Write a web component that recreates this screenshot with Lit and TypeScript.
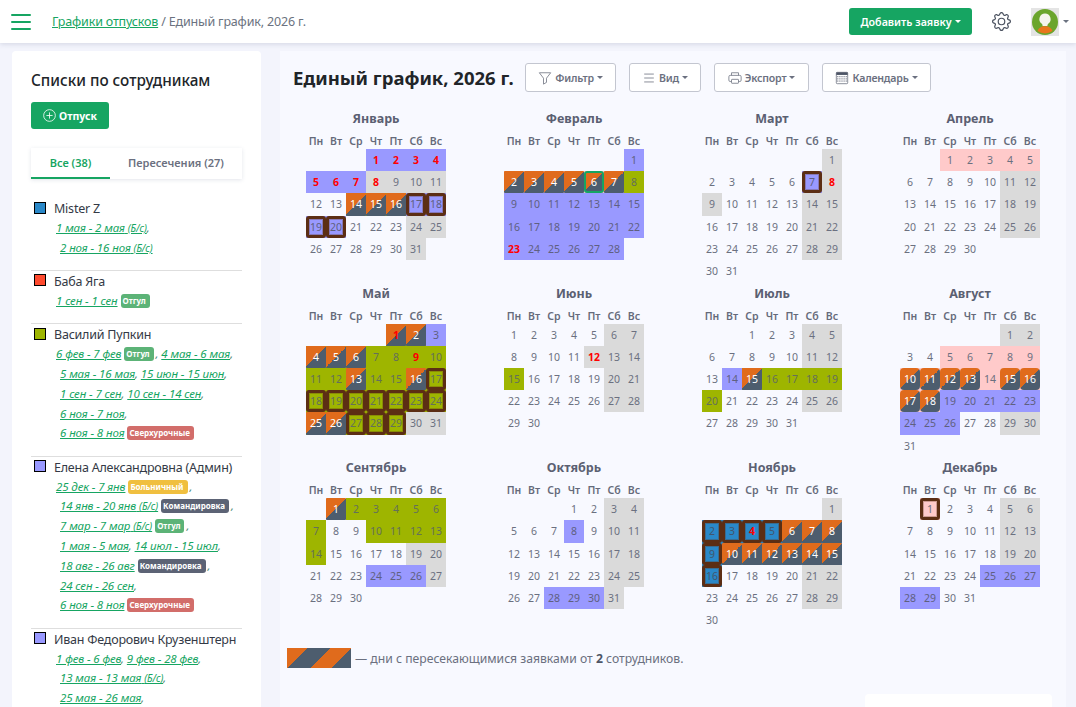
import { LitElement, html, css, svg } from 'lit';
import { customElement } from 'lit/decorators.js';

interface Month {
  name: string;
  offset: number;
  days: number;
  spec: string; // "p:1-7 g:8-11" base colours by day range
  over?: string;
  box?: string;
  red?: string;
  ring?: string;
  corner?: string;
  soft?: boolean;
}

const MONTHS: Month[] = [
  { name: 'Январь', offset: 3, days: 31, spec: 'p:1-7 g:8-11 g:24-25 g:31 p:17-20', over: '14-16', box: '17-20', red: '1-8', corner: 'l' },
  { name: 'Февраль', offset: 6, days: 28, spec: 'p:1 l:8 p:9-28', over: '2-7', ring: '6', red: '23', corner: 'k' },
  { name: 'Март', offset: 6, days: 31, spec: 'g:1 p:7 g:8-9 g:14-15 g:21-22 g:28-29', box: '7', red: '8' },
  { name: 'Апрель', offset: 2, days: 30, spec: 'k:1-5 g:11-12 g:18-19 g:25-26' },
  { name: 'Май', offset: 4, days: 31, spec: 'p:3 l:7-12 l:14-15 l:17-24 l:27-29 g:30-31', over: '1-2 4-6 13 16 25-26', box: '17-24 27-29', red: '1 9', corner: 'l' },
  { name: 'Июнь', offset: 0, days: 30, spec: 'g:6-7 g:12-14 g:20-21 g:27-28 l:15', red: '12' },
  { name: 'Июль', offset: 2, days: 31, spec: 'g:4-5 g:11-12 p:14 l:16-20 g:25-26', over: '15', corner: 'l' },
  { name: 'Август', offset: 5, days: 31, spec: 'g:1-2 k:5-9 k:14 p:19-26 g:29-30', over: '10-13 15-18', corner: 'k', soft: true },
  { name: 'Сентябрь', offset: 1, days: 30, spec: 'l:2-7 l:10-14 g:19-20 p:24-26 g:27', over: '1', corner: 'k' },
  { name: 'Октябрь', offset: 3, days: 31, spec: 'g:3-4 p:8 g:10-11 g:17-18 g:24-25 p:28-30 g:31' },
  { name: 'Ноябрь', offset: 6, days: 30, spec: 'g:1 b:2-5 b:9 b:16 g:21-22 g:28-29', over: '6-8 10-15', box: '2-5 9 16', red: '4', corner: 'b' },
  { name: 'Декабрь', offset: 1, days: 31, spec: 'k:1 g:5-6 g:12-13 g:19-20 p:25-29', box: '1' },
];

const WEEK = ['Пн', 'Вт', 'Ср', 'Чт', 'Пт', 'Сб', 'Вс'];

function expand(list = '') {
  const out = new Set<number>();
  list.split(' ').filter(Boolean).forEach((part) => {
    const [a, b] = part.split('-').map(Number);
    for (let d = a; d <= (b ?? a); d++) out.add(d);
  });
  return out;
}

function colours(spec: string) {
  const out = new Map<number, string>();
  spec.split(' ').forEach((part) => {
    const [c, range] = part.split(':');
    expand(range).forEach((d) => out.set(d, c));
  });
  return out;
}

type Chunk = string | { t: string; bs?: boolean } | { badge: string; cls: string };

interface Person {
  name: string;
  color: string;
  lines: Chunk[][];
}

const l = (t: string, bs = false) => ({ t, bs });
const otg = { badge: 'Отгул', cls: 'b-green' };
const over = { badge: 'Сверхурочные', cls: 'b-red' };
const sick = { badge: 'Больничный', cls: 'b-yellow' };
const trip = { badge: 'Командировка', cls: 'b-slate' };

const PEOPLE: Person[] = [
  {
    name: 'Mister Z',
    color: 'sw-blue',
    lines: [[l('1 мая - 2 мая', true), ','], [l('2 ноя - 16 ноя', true)]],
  },
  { name: 'Баба Яга', color: 'sw-red', lines: [[l('1 сен - 1 сен'), otg]] },
  {
    name: 'Василий Пупкин',
    color: 'sw-olive',
    lines: [
      [l('6 фев - 7 фев'), otg, ', ', l('4 мая - 6 мая'), ','],
      [l('5 мая - 16 мая'), ', ', l('15 июн - 15 июн'), ','],
      [l('1 сен - 7 сен'), ', ', l('10 сен - 14 сен'), ','],
      [l('6 ноя - 7 ноя'), ','],
      [l('6 ноя - 8 ноя'), over],
    ],
  },
  {
    name: 'Елена Александровна (Админ)',
    color: 'sw-purple',
    lines: [
      [l('25 дек - 7 янв'), sick, ','],
      [l('14 янв - 20 янв', true), trip, ','],
      [l('7 мар - 7 мар', true), otg, ','],
      [l('1 мая - 5 мая'), ', ', l('14 июл - 15 июл'), ','],
      [l('18 авг - 26 авг'), trip, ','],
      [l('24 сен - 26 сен'), ','],
      [l('6 ноя - 8 ноя'), over],
    ],
  },
  {
    name: 'Иван Федорович Крузенштерн',
    color: 'sw-purple',
    lines: [
      [l('1 фев - 6 фев'), ', ', l('9 фев - 28 фев'), ','],
      [l('13 мая - 13 мая', true), ','],
      [l('25 мая - 26 мая'), ','],
    ],
  },
];

const caret = html`<span class="caret"></span>`;

@customElement('app-root')
export class AppRoot extends LitElement {
  static styles = css`
    :host {
      display: block;
      height: 707px;
      overflow: hidden;
      background: #f3f4fc;
      font-family: 'Noto Sans', sans-serif;
      color: #6b7080;
    }

    /* top bar */
    .top {
      height: 43px;
      background: #fff;
      box-shadow: 0 1px 5px rgba(60, 70, 110, 0.18);
      display: flex;
      align-items: center;
      padding: 0 7px 0 11px;
      position: relative;
    }
    .burger {
      width: 20px;
      display: flex;
      flex-direction: column;
      gap: 5px;
      margin-right: 21px;
    }
    .burger i {
      display: block;
      height: 2px;
      background: #16a562;
      border-radius: 1px;
    }
    .crumbs {
      font-size: 12.5px;
      letter-spacing: -0.17px;
      flex: 1;
      color: #6b7280;
    }
    .crumbs a {
      color: #16a562;
      text-decoration: underline;
    }
    .add {
      width: 123px;
      height: 27px;
      border-radius: 3px;
      background: #16a562;
      color: #fff;
      font-size: 10.7px;
      font-weight: 600;
      display: flex;
      align-items: center;
      justify-content: center;
      margin-right: 20px;
    }
    .caret {
      display: inline-block;
      width: 0;
      height: 0;
      margin-left: 3px;
      border-top: 3px solid currentColor;
      border-left: 3px solid transparent;
      border-right: 3px solid transparent;
      vertical-align: 2px;
    }
    .gear {
      width: 19px;
      height: 19px;
      margin-right: 20px;
      color: #4b5260;
    }
    .avatar {
      width: 28px;
      height: 28px;
      margin-right: 4px;
    }
    .top > .caret {
      color: #6b7280;
      margin-left: 0;
    }

    /* page */
    .page {
      display: grid;
      grid-template-columns: 249px 786px;
      column-gap: 19px;
      padding: 8px 0 0 12px;
      align-items: start;
    }

    /* left list */
    .side {
      background: #fff;
      border-radius: 4px;
      padding: 19px 19px 0;
      height: 900px;
      box-sizing: border-box;
    }
    .side h3 {
      margin: 0 0 11px;
      font-size: 15.3px;
      line-height: 21px;
      font-weight: 500;
      color: #212529;
    }
    .leave {
      width: 78px;
      height: 27px;
      border-radius: 3px;
      background: #16a562;
      color: #fff;
      font-size: 10.5px;
      font-weight: 700;
      display: flex;
      align-items: center;
      justify-content: center;
      gap: 3px;
    }
    .leave svg {
      width: 13px;
      height: 13px;
    }
    .tabs {
      display: flex;
      height: 31px;
      margin-top: 19px;
      background: #fff;
      box-shadow: 0 1px 4px rgba(60, 70, 110, 0.14);
      font-size: 11px;
      font-weight: 600;
      margin-bottom: 19px;
    }
    .tab {
      flex: 1;
      display: flex;
      align-items: center;
      justify-content: center;
      box-sizing: border-box;
      padding-bottom: 3px;
    }
    .tab.on {
      flex: 0 0 79px;
      color: #16a562;
      border-bottom: 2px solid #16a562;
      padding-bottom: 1px;
    }
    .person {
      border-bottom: 1px solid #dedede;
      padding: 1px 0 12.4px;
    }
    .person:first-of-type {
      padding-top: 0;
      margin-top: 4px;
    }
    .who {
      display: flex;
      align-items: center;
      font-size: 12.5px;
      letter-spacing: -0.22px;
      line-height: 19px;
      color: #343a46;
    }
    .swatch {
      width: 12px;
      height: 12px;
      border: 1px solid #000;
      box-sizing: border-box;
      margin: -2px 8px 0 3px;
    }
    .sw-blue { background: #2a88c8; }
    .sw-red { background: #ff4a2e; }
    .sw-olive { background: #9eb500; }
    .sw-purple { background: #9999ff; }
    .lines {
      padding-left: 29px;
      font-size: 11.5px;
      font-style: italic;
      letter-spacing: -0.1px;
      line-height: 19.8px;
      color: #4d8a78;
    }
    .line {
      white-space: nowrap;
      height: 19.8px;
    }
    .line:first-child {
      margin-left: -4px;
    }
    .lines a {
      color: #16a562;
      text-decoration: underline;
    }
    .bs {
      font-size: 10px;
    }
    .badge {
      display: inline-block;
      font-style: normal;
      font-weight: 700;
      font-size: 8px;
      letter-spacing: 0;
      line-height: 14px;
      height: 14px;
      padding: 0 4px 0 2px;
      border-radius: 3px;
      color: #fff;
      margin: 0 2px 0 3px;
      vertical-align: 1px;
    }
    .b-green { background: #5cb377; }
    .b-red { background: #d26d6a; }
    .b-yellow { background: #f0bf3f; }
    .b-slate { background: #5c6375; }

    /* calendar panel */
    .main {
      background: #f8f9ff;
      padding: 12px 0 0 13px;
      height: 700px;
      box-sizing: border-box;
    }
    .bar {
      display: flex;
      align-items: center;
      height: 29px;
    }
    .bar h2 {
      margin: 0 12px 0 0;
      font-size: 18.5px;
      font-weight: 700;
      color: #212529;
      white-space: nowrap;
      width: 220px;
    }
    .btn {
      height: 29px;
      box-sizing: border-box;
      border: 1px solid #c3c6d0;
      border-radius: 3px;
      background: #fff;
      color: #6b7080;
      font-size: 10.6px;
      letter-spacing: -0.2px;
      font-weight: 600;
      display: flex;
      align-items: center;
      justify-content: center;
      gap: 3px;
      margin-right: 13px;
    }
    .btn .caret {
      margin-left: 0;
    }
    .btn svg {
      width: 14px;
      height: 14px;
      color: #7a7f8c;
    }
    .w-filter { width: 91px; }
    .w-view { width: 72px; }
    .w-export { width: 95px; }
    .w-cal { width: 109px; }

    .months {
      display: grid;
      grid-template-columns: repeat(4, 140px);
      column-gap: 58px;
      row-gap: 0.4px;
      margin: 16px 0 0 13px;
    }
    .title {
      height: 22px;
      line-height: 22px;
      text-align: center;
      font-size: 12.5px;
      font-weight: 700;
      color: #5b6072;
    }
    .grid {
      display: grid;
      grid-template-columns: repeat(7, 20px);
      grid-auto-rows: 22.2px;
      height: 133.2px;
    }
    .week {
      display: grid;
      grid-template-columns: repeat(7, 20px);
      height: 19px;
      line-height: 22px;
      text-align: center;
      font-size: 10.5px;
      font-weight: 600;
      color: #656a7a;
    }
    .day {
      font-size: 10.5px;
      display: flex;
      min-width: 0;
      color: #6b7080;
    }
    .in {
      flex: 1;
      display: flex;
      align-items: center;
      justify-content: center;
      box-sizing: border-box;
      min-width: 0;
    }
    .c-p { background: #9999ff; color: #5f6080; }
    .c-g { background: #dadada; }
    .c-l { background: #9eb500; color: #64705a; }
    .c-k { background: #ffcaca; }
    .c-b { background: #2a88c8; color: #41566e; }
    .over {
      background: linear-gradient(135deg, #e06b1c 0 50%, #4d5d6e 50% 100%);
      color: #fff;
      font-weight: 400;
      border-radius: 1px;
    }
    .soft .over {
      border-radius: 4px;
    }
    .box {
      border: 3px solid #5c2e14;
      border-radius: 3px;
      box-shadow: inset 0 0 0 1px rgba(92, 46, 20, 0.3);
    }
    .ring {
      border: 2px solid #16a562;
      border-radius: 3px;
    }
    .red,
    .over.red {
      color: #f00;
      font-weight: 700;
    }

    .legend {
      display: flex;
      align-items: center;
      gap: 4px;
      margin: 17px 0 0 -6px;
      font-size: 12.2px;
      color: #6b7080;
    }
    .legend b {
      color: #4d5566;
    }
    .stripes {
      width: 64px;
      height: 20px;
      background: repeating-linear-gradient(135deg, #e06b1c 0 14.4px, #4d5d6e 14.4px 31px);
    }
    .note {
      width: 187px;
      height: 60px;
      margin: 26px 0 0 572px;
      background: #fff;
      border-radius: 4px;
    }
  `;

  renderMonth(m: Month) {
    const base = colours(m.spec);
    const overs = expand(m.over);
    const boxes = expand(m.box);
    const reds = expand(m.red);
    const rings = expand(m.ring);
    const blanks = Array.from({ length: m.offset });
    const days = Array.from({ length: m.days }, (_, i) => i + 1);
    return html`
      <div class="month ${m.soft ? 'soft' : ''}">
        <div class="title">${m.name}</div>
        <div class="week">${WEEK.map((w) => html`<span>${w}</span>`)}</div>
        <div class="grid">
          ${blanks.map(() => html`<span></span>`)}
          ${days.map((d) => {
            const isOver = overs.has(d);
            const c = isOver ? m.corner : base.get(d);
            const inner = [
              'in',
              isOver ? 'over' : '',
              boxes.has(d) ? 'box' : '',
              rings.has(d) ? 'ring' : '',
              reds.has(d) ? 'red' : '',
            ].join(' ');
            return html`<div class="day ${c ? `c-${c}` : ''}"><span class=${inner}>${d}</span></div>`;
          })}
        </div>
      </div>
    `;
  }

  renderChunk(c: Chunk) {
    if (typeof c === 'string') return c;
    if ('badge' in c) return html`<span class="badge ${c.cls}">${c.badge}</span>`;
    return html`<a>${c.t}${c.bs ? html` <span class="bs">(Б/с)</span>` : ''}</a>`;
  }

  render() {
    return html`
      <header class="top">
        <div class="burger"><i></i><i></i><i></i></div>
        <div class="crumbs"><a>Графики отпусков</a> / Единый график, 2026 г.</div>
        <div class="add">Добавить заявку${caret}</div>
        <svg class="gear" viewBox="0 0 16 16" fill="currentColor">
          <path d="M8 4.754a3.246 3.246 0 1 0 0 6.492 3.246 3.246 0 0 0 0-6.492zM5.754 8a2.246 2.246 0 1 1 4.492 0 2.246 2.246 0 0 1-4.492 0z" />
          <path d="M9.796 1.343c-.527-1.79-3.065-1.79-3.592 0l-.094.319a.873.873 0 0 1-1.255.52l-.292-.16c-1.64-.892-3.433.902-2.54 2.541l.159.292a.873.873 0 0 1-.52 1.255l-.319.094c-1.79.527-1.79 3.065 0 3.592l.319.094a.873.873 0 0 1 .52 1.255l-.16.292c-.892 1.64.901 3.434 2.541 2.54l.292-.159a.873.873 0 0 1 1.255.52l.094.319c.527 1.79 3.065 1.79 3.592 0l.094-.319a.873.873 0 0 1 1.255-.52l.292.16c1.64.893 3.434-.902 2.54-2.541l-.159-.292a.873.873 0 0 1 .52-1.255l.319-.094c1.79-.527 1.79-3.065 0-3.592l-.319-.094a.873.873 0 0 1-.52-1.255l.16-.292c.893-1.64-.902-3.433-2.541-2.54l-.292.159a.873.873 0 0 1-1.255-.52l-.094-.319zm-2.633.283c.246-.835 1.428-.835 1.674 0l.094.319a1.873 1.873 0 0 0 2.693 1.115l.291-.16c.764-.415 1.6.42 1.184 1.185l-.159.292a1.873 1.873 0 0 0 1.116 2.692l.318.094c.835.246.835 1.428 0 1.674l-.319.094a1.873 1.873 0 0 0-1.115 2.693l.16.291c.415.764-.42 1.6-1.185 1.184l-.291-.159a1.873 1.873 0 0 0-2.693 1.116l-.094.318c-.246.835-1.428.835-1.674 0l-.094-.319a1.873 1.873 0 0 0-2.692-1.115l-.292.16c-.764.415-1.6-.42-1.184-1.185l.159-.291A1.873 1.873 0 0 0 1.945 8.93l-.319-.094c-.835-.246-.835-1.428 0-1.674l.319-.094A1.873 1.873 0 0 0 3.06 4.377l-.16-.292c-.415-.764.42-1.6 1.185-1.184l.292.159a1.873 1.873 0 0 0 2.692-1.115l.094-.319z" />
        </svg>
        <svg class="avatar" viewBox="0 0 28 28">
          <rect width="28" height="28" fill="#e4e4e4" />
          <circle cx="14" cy="14" r="13" fill="#6aa52c" />
          <path d="M14 5.5a5.6 5.6 0 0 1 3.2 10.2c-.6.5-.8 1.4-.8 2.3h-4.8c0-.9-.2-1.8-.8-2.3A5.6 5.6 0 0 1 14 5.5z" fill="#f4f4ec" />
          <path d="M6.5 23c1-3 3.500-4.200 5.500-4.700h4c2 .5 4.500 1.700 5.500 4.700a13 13 0 0 1-15 0z" fill="#e8761c" />
        </svg>
        ${caret}
      </header>

      <div class="page">
        <aside class="side">
          <h3>Списки по сотрудникам</h3>
          <div class="leave">
            <svg viewBox="0 0 16 16" fill="none" stroke="currentColor" stroke-width="1">
              <circle cx="8" cy="8" r="7.2" />
              <path d="M8 4.200v7.600M4.200 8h7.600" />
            </svg>
            Отпуск
          </div>
          <div class="tabs">
            <div class="tab on">Все (38)</div>
            <div class="tab">Пересечения (27)</div>
          </div>
          ${PEOPLE.map(
            (p) => html`
              <div class="person">
                <div class="who"><span class="swatch ${p.color}"></span>${p.name}</div>
                <div class="lines">
                  ${p.lines.map((ln) => html`<div class="line">${ln.map((c) => this.renderChunk(c))}</div>`)}
                </div>
              </div>
            `
          )}
        </aside>

        <main class="main">
          <div class="bar">
            <h2>Единый график, 2026 г.</h2>
            <div class="btn w-filter">
              <svg viewBox="0 0 16 16" fill="none" stroke="currentColor" stroke-width="1">
                <path d="M1.500 2h13L9.700 8.200V13l-3.400 2V8.200z" stroke-linejoin="round" />
              </svg>
              Фильтр${caret}
            </div>
            <div class="btn w-view">
              <svg viewBox="0 0 16 16" fill="none" stroke="currentColor" stroke-width="1">
                <path d="M2.500 3.500h11M2.500 8h11M2.500 12.500h11" />
              </svg>
              Вид${caret}
            </div>
            <div class="btn w-export">
              <svg viewBox="0 0 16 16" fill="none" stroke="currentColor" stroke-width="1">
                <path d="M4 5V2h8v3M4 12H2.500A1.500 1.500 0 0 1 1 10.500v-4A1.500 1.500 0 0 1 2.500 5h11A1.500 1.500 0 0 1 15 6.500v4a1.500 1.500 0 0 1-1.500 1.500H12" />
                <rect x="4" y="9.500" width="8" height="4.500" rx=".5" />
              </svg>
              Экспорт${caret}
            </div>
            <div class="btn w-cal">
              <svg viewBox="0 0 16 16" fill="none">
                <rect x="1.500" y="1.500" width="13" height="13" rx="1" stroke="currentColor" />
                <rect x="1.500" y="1.500" width="13" height="3" fill="#4d5566" />
                ${[6.5, 9, 11.5].flatMap((y) =>
                  [3.2, 5.6, 8, 10.4, 12.8].map((x) => svg`<rect x=${x - 0.6} y=${y - 0.6} width="1.200" height="1.200" fill="#5b6072" />`)
                )}
              </svg>
              Календарь${caret}
            </div>
          </div>

          <div class="months">${MONTHS.map((m) => this.renderMonth(m))}</div>

          <div class="legend">
            <span class="stripes"></span>
            <span>— дни с пересекающимися заявками от <b>2</b> сотрудников.</span>
          </div>
          <div class="note"></div>
        </main>
      </div>
    `;
  }
}
